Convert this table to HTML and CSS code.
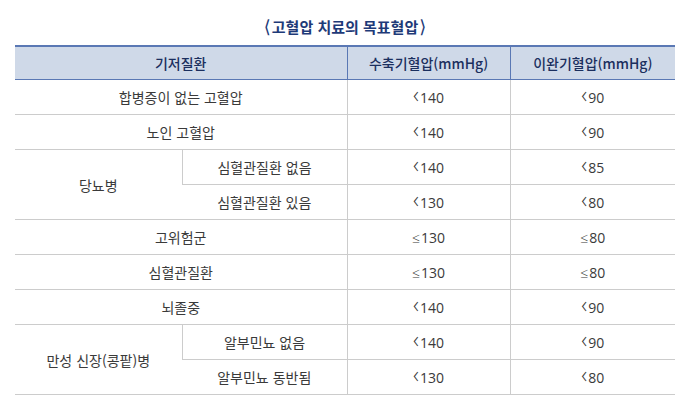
FILE: index.html
```html
<!DOCTYPE html>
<html lang="ko">
<head>
<meta charset="utf-8">
<link rel="stylesheet" href="styles.css">
</head>
<body>
<div class="page">
  <h1 class="title"><span class="br">⟨</span>고혈압 치료의 목표혈압<span class="br">⟩</span></h1>
  <table class="bp">
    <colgroup>
      <col class="c1"><col class="c2"><col class="c3"><col class="c4">
    </colgroup>
    <thead>
      <tr>
        <th colspan="2">기저질환</th>
        <th>수축기혈압(mmHg)</th>
        <th>이완기혈압(mmHg)</th>
      </tr>
    </thead>
    <tbody>
      <tr><td colspan="2">합병증이 없는 고혈압</td><td class="num"><span class="lt">‹</span>140</td><td class="num"><span class="lt">‹</span>90</td></tr>
      <tr><td colspan="2">노인 고혈압</td><td class="num"><span class="lt">‹</span>140</td><td class="num"><span class="lt">‹</span>90</td></tr>
      <tr><td rowspan="2">당뇨병</td><td>심혈관질환 없음</td><td class="num"><span class="lt">‹</span>140</td><td class="num"><span class="lt">‹</span>85</td></tr>
      <tr><td>심혈관질환 있음</td><td class="num"><span class="lt">‹</span>130</td><td class="num"><span class="lt">‹</span>80</td></tr>
      <tr><td colspan="2">고위험군</td><td class="num"><span class="le">≤</span>130</td><td class="num"><span class="le">≤</span>80</td></tr>
      <tr><td colspan="2">심혈관질환</td><td class="num"><span class="le">≤</span>130</td><td class="num"><span class="le">≤</span>80</td></tr>
      <tr><td colspan="2">뇌졸중</td><td class="num"><span class="lt">‹</span>140</td><td class="num"><span class="lt">‹</span>90</td></tr>
      <tr><td rowspan="2">만성 신장(콩팥)병</td><td>알부민뇨 없음</td><td class="num"><span class="lt">‹</span>140</td><td class="num"><span class="lt">‹</span>90</td></tr>
      <tr><td>알부민뇨 동반됨</td><td class="num"><span class="lt">‹</span>130</td><td class="num"><span class="lt">‹</span>80</td></tr>
    </tbody>
  </table>
</div>
</body>
</html>
```

FILE: styles.css
```css
html, body {
  margin: 0;
  padding: 0;
  background: #ffffff;
}
body {
  font-family: "Noto Sans CJK KR", sans-serif;
  color: #3a3a3a;
}
.page {
  padding: 0 15px;
}
.title {
  margin: 0;
  height: 37px;
  padding-top: 8px;
  display: flex;
  align-items: center;
  justify-content: center;
  font-size: 15px;
  font-weight: 700;
  color: #1e3a78;
  font-family: "Noto Sans CJK KR", sans-serif;
}
.title .br {
  font-family: "DejaVu Sans", sans-serif;
  font-weight: 400;
  font-size: 18px;
  margin: 0 1px;
}
.bp {
  width: 660px;
  border-collapse: collapse;
  table-layout: fixed;
  font-size: 14px;
}
.c1 { width: 167px; }
.c2 { width: 165px; }
.c3 { width: 163px; }
.c4 { width: 165px; }
.bp th {
  height: 32px;
  padding: 0;
  background: #cfd9e8;
  color: #1b2f5e;
  font-weight: 500;
  border-top: 2px solid #5a78b4;
  border-bottom: 1px solid #5a78b4;
  border-left: 1px solid #5a78b4;
}
.bp th:first-child { border-left: none; }
.bp td {
  height: 34px;
  padding: 0;
  text-align: center;
  border-bottom: 1px solid #cccccc;
  border-left: 1px solid #cccccc;
}
.bp td.num {
  font-family: "Open Sans", sans-serif;
  font-size: 14px;
}
.bp .lt {
  font-size: 23px;
  line-height: 0;
  font-weight: 300;
  margin-right: 1px;
}
.bp .le {
  font-weight: 300;
  margin-right: 1px;
}
.bp tr td:first-child { border-left: none; }
```
